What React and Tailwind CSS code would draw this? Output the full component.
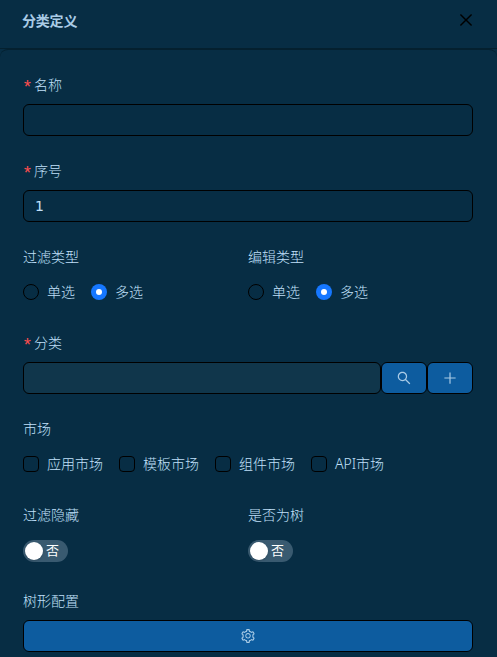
import React, { useState } from 'react';
import { AiOutlineClose, AiOutlinePlus, AiOutlineSearch, AiOutlineSetting } from 'react-icons/ai';

function FormItem({ label, required, children }) {
  return (
    <div className="mb-6">
      <div className="mb-2 flex h-[22px] items-center text-sm leading-[22px]">
        {required && <span className="-ml-px mr-1 w-2 pt-[5px] font-['Liberation_Mono',monospace] text-lg leading-[22px] font-normal text-[#ff4d4f]">*</span>}
        <span>{label}</span>
      </div>
      <div className="flex h-8 items-center">{children}</div>
    </div>
  );
}

function TextInput({ value, onChange }) {
  return (
    <input
      value={value}
      onChange={onChange}
      className="h-8 w-full rounded-md border border-black bg-transparent px-[11px] font-['DejaVu_Sans',sans-serif] text-sm font-normal outline-none"
    />
  );
}

function RadioGroup({ value, onChange, options }) {
  return (
    <div className="flex">
      {options.map(o => (
        <label key={o} className="mr-2 flex cursor-pointer items-center text-sm" onClick={() => onChange(o)}>
          {o === value
            ? <span className="flex h-4 w-4 items-center justify-center rounded-full bg-[#1677ff]"><i className="h-1.5 w-1.5 rounded-full bg-white"></i></span>
            : <span className="h-4 w-4 rounded-full border border-black"></span>}
          <span className="px-2">{o}</span>
        </label>
      ))}
    </div>
  );
}

function Switch({ checked, onChange }) {
  return (
    <button
      onClick={() => onChange(!checked)}
      className={`mt-0.5 flex h-[22px] w-[45px] cursor-pointer items-center rounded-full px-0.5 text-[13px] font-normal text-white ${checked ? 'flex-row-reverse bg-[#1677ff]' : 'bg-[#395a70]'}`}
    >
      <span className="h-[18px] w-[18px] rounded-full bg-white shadow-sm"></span>
      <span className="mx-[3px] -mt-px">{checked ? '是' : '否'}</span>
    </button>
  );
}

const markets = ['应用市场', '模板市场', '组件市场', 'API市场'];

function App() {
  const [name, setName] = useState('');
  const [order, setOrder] = useState('1');
  const [filterType, setFilterType] = useState('多选');
  const [editType, setEditType] = useState('多选');
  const [checked, setChecked] = useState([]);
  const [hidden, setHidden] = useState(false);
  const [tree, setTree] = useState(false);

  const toggleMarket = (m) => {
    setChecked(checked.includes(m) ? checked.filter(c => c !== m) : [...checked, m]);
  };

  return (
    <div className="h-[657px] w-full overflow-hidden bg-[#072d44] font-['Noto_Sans','Noto_Sans_CJK_SC',sans-serif] font-light text-[#c0e0fa]">
      <header className="flex h-[49px] items-center justify-between border-b border-[#04202f] pr-[22px] pb-2 pl-[22px]">
        <h1 className="pt-px text-sm font-bold tracking-[-0.2px] text-[#a9cbe6]">分类定义</h1>
        <AiOutlineClose className="h-[18px] w-[18px] text-black" />
      </header>
      <main className="h-[640px] rounded-t-lg border-t border-[#04202f] px-6 pt-6 pl-[23px]">
        <FormItem label="名称" required>
          <TextInput value={name} onChange={e => setName(e.target.value)} />
        </FormItem>
        <FormItem label="序号" required>
          <TextInput value={order} onChange={e => setOrder(e.target.value)} />
        </FormItem>
        <div className="grid grid-cols-2">
          <FormItem label="过滤类型">
            <RadioGroup value={filterType} onChange={setFilterType} options={['单选', '多选']} />
          </FormItem>
          <FormItem label="编辑类型">
            <RadioGroup value={editType} onChange={setEditType} options={['单选', '多选']} />
          </FormItem>
        </div>
        <FormItem label="分类" required>
          <div className="h-8 flex-1 rounded-md border border-black bg-[#10364b]"></div>
          <button className="flex h-8 w-[46px] items-center justify-center rounded-md border border-black bg-[#0d5c9f] text-[#a9cbe6]">
            <AiOutlineSearch className="h-4 w-4" />
          </button>
          <button className="flex h-8 w-[46px] items-center justify-center rounded-md border border-black bg-[#0d5c9f] text-[#a9cbe6]">
            <AiOutlinePlus className="h-4 w-4" />
          </button>
        </FormItem>
        <FormItem label="市场">
          {markets.map(m => (
            <label key={m} className="mr-2 flex cursor-pointer items-center text-sm" onClick={() => toggleMarket(m)}>
              <span className={`h-4 w-4 rounded border border-black ${checked.includes(m) ? 'bg-[#1677ff]' : ''}`}></span>
              <span className="px-2">{m}</span>
            </label>
          ))}
        </FormItem>
        <div className="grid grid-cols-2">
          <FormItem label="过滤隐藏">
            <Switch checked={hidden} onChange={setHidden} />
          </FormItem>
          <FormItem label="是否为树">
            <Switch checked={tree} onChange={setTree} />
          </FormItem>
        </div>
        <FormItem label="树形配置">
          <button className="flex h-8 w-full items-center justify-center rounded-md border border-black bg-[#0d5c9f] text-[#a9cbe6]">
            <AiOutlineSetting className="h-4 w-4" />
          </button>
        </FormItem>
      </main>
    </div>
  );
}

export default App;
